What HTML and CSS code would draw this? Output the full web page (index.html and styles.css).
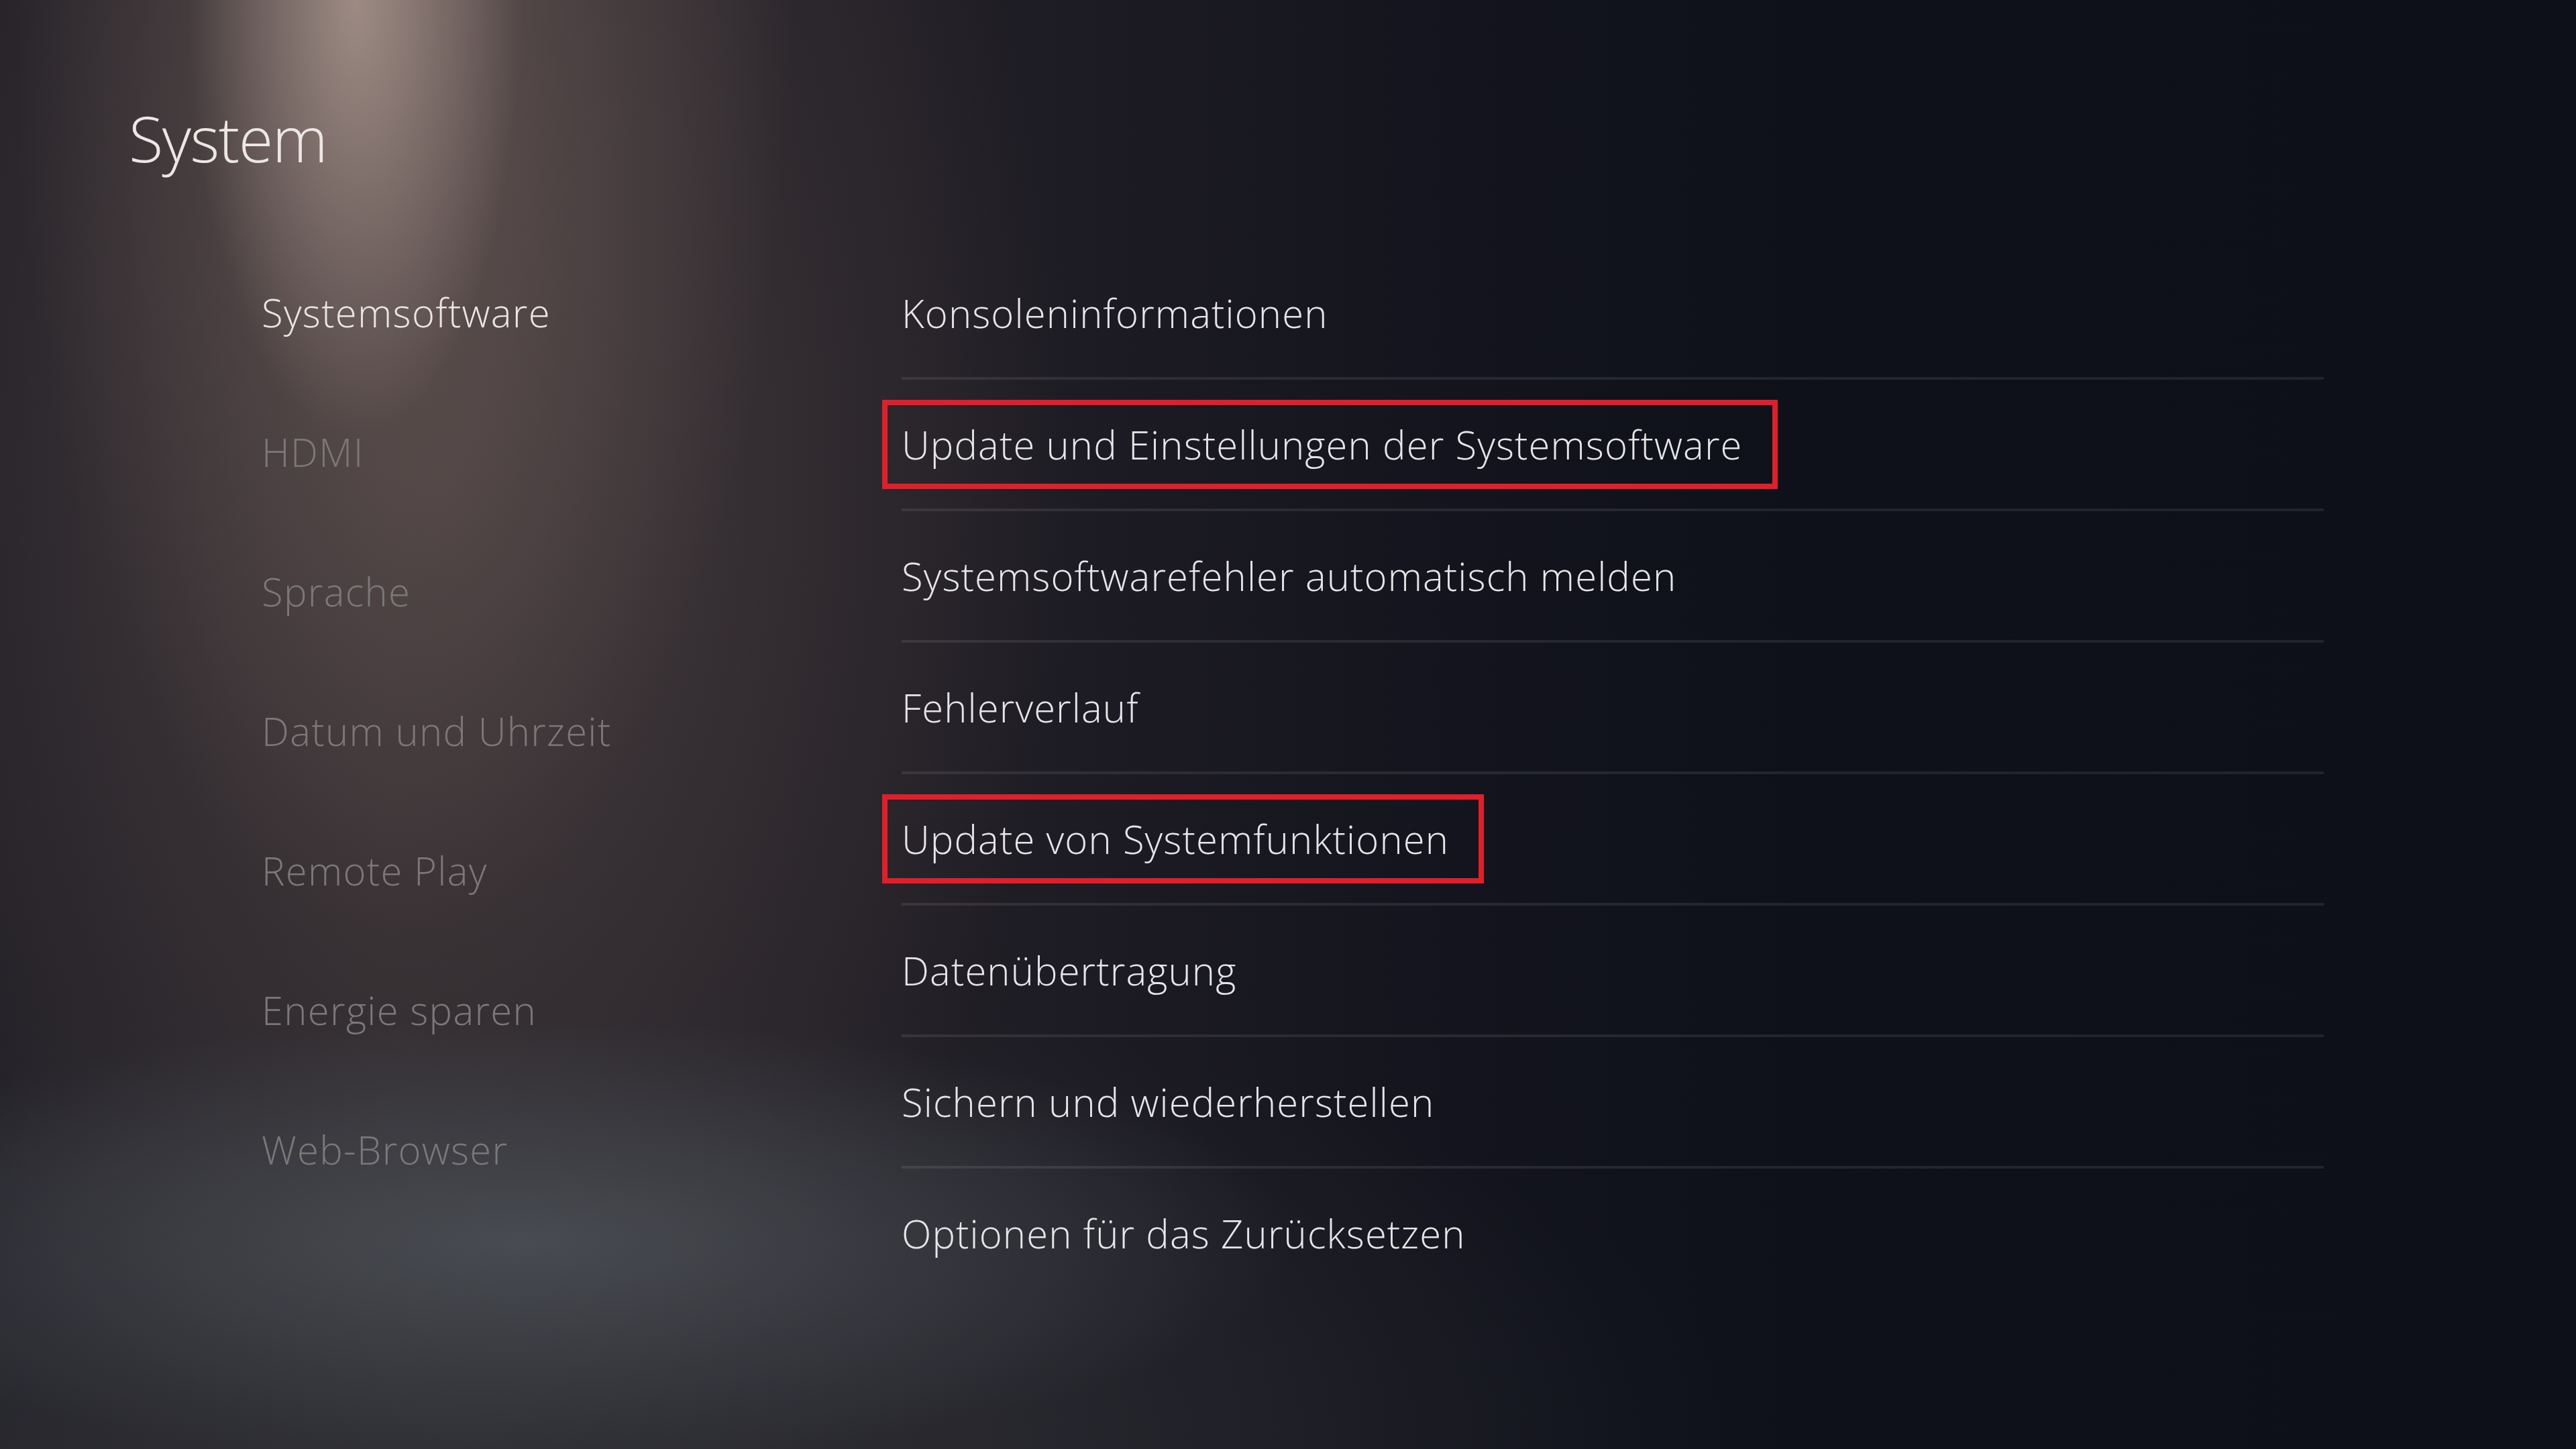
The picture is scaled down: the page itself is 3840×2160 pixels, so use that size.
FILE: index.html
```html
<!DOCTYPE html>
<html lang="de">

<head>
  <meta charset="UTF-8" />
  <title>System</title>
  <link rel="stylesheet" href="styles.css">
</head>

<body>

<div class="screen">
  <h1 class="page-title">System</h1>

  <div class="content">
    <!-- Kategorien links -->
    <ul class="side-nav">
      <li class="active">Systemsoftware</li>
      <li>HDMI</li>
      <li>Sprache</li>
      <li>Datum und Uhrzeit</li>
      <li>Remote Play</li>
      <li>Energie sparen</li>
      <li>Web-Browser</li>
    </ul>

    <!-- Einstellungen rechts -->
    <ul class="settings-list">
      <li>Konsoleninformationen</li>
      <li><span class="mark">Update und Einstellungen der Systemsoftware</span></li>
      <li>Systemsoftwarefehler automatisch melden</li>
      <li>Fehlerverlauf</li>
      <li><span class="mark">Update von Systemfunktionen</span></li>
      <li>Datenübertragung</li>
      <li>Sichern und wiederherstellen</li>
      <li>Optionen für das Zurücksetzen</li>
    </ul>
  </div>
</div>

</body>
</html>
```

FILE: styles.css
```css
html,
body {
  margin: 0;
  padding: 0;
}
body {
  width: 3840px;
  height: 2160px;
  overflow: hidden;
  font-family: "Open Sans", "Noto Sans", sans-serif;
  font-weight: 300;
  color: #e6e5e8;
  background-color: #0d0f19;
  background-image:
    /* Lichtkegel oben */
    radial-gradient(ellipse 250px 650px at 530px 0, rgba(185, 165, 155, 0.7), rgba(185, 165, 155, 0) 100%),
    radial-gradient(ellipse 580px 1400px at 600px 0, rgba(125, 105, 100, 0.55), rgba(125, 105, 100, 0) 100%),
    /* Schimmer unten */
    radial-gradient(ellipse 1150px 330px at 780px 1850px, rgba(80, 85, 91, 0.75), rgba(80, 85, 91, 0) 100%),
    radial-gradient(ellipse 1900px 700px at 700px 2160px, rgba(48, 50, 56, 0.8), rgba(48, 50, 56, 0) 100%),
    radial-gradient(ellipse 950px 1500px at 650px 700px, rgba(82, 70, 70, 0.7), rgba(82, 70, 70, 0) 100%),
    linear-gradient(90deg, #211f26 0, #2a262b 15%, #221f26 35%, #14151e 55%, #0e101a 70%, #0d0f19 100%);
}
.screen {
  display: flex;
  flex-direction: column;
}
.page-title {
  margin: 0;
  padding: 146px 0 0 192px;
  font-size: 94px;
  font-weight: 300;
  line-height: 120px;
  letter-spacing: -1.5px;
  color: #ebe7e5;
}
.content {
  display: grid;
  grid-template-columns: 954px 2120px;
  padding-left: 390px;
  align-items: start;
}
.side-nav,
.settings-list {
  list-style: none;
  margin: 0;
  padding: 0;
}
.side-nav {
  padding-top: 96px;
}
.side-nav li {
  height: 208px;
  font-size: 58px;
  line-height: 208px;
  letter-spacing: 1.3px;
  color: #7c7879;
  white-space: nowrap;
}
.side-nav li.active {
  color: #e9e6e4;
}
.settings-list {
  padding-top: 104px;
}
.settings-list li {
  display: flex;
  align-items: center;
  height: 192px;
  font-size: 58px;
  letter-spacing: 1.1px;
  white-space: nowrap;
  border-bottom: 4px solid rgba(255, 255, 255, 0.09);
}
.settings-list li:last-child {
  border-bottom: none;
}
.mark {
  display: inline-block;
  margin-left: -29px;
  padding: 0 44px 0 21px;
  line-height: 117px;
  border: 8px solid #e11f2a;
}
```
